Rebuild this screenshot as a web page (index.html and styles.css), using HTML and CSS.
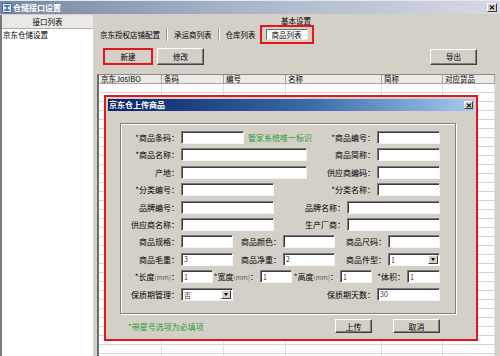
FILE: index.html
```html
<!DOCTYPE html>
<html lang="zh-CN">
<head>
  <meta charset="UTF-8" />
  <title>仓储接口设置</title>
  <link rel="stylesheet" href="styles.css">
</head>
<body>

  <header class="titlebar">
    <svg class="app-icon" viewBox="0 0 10 10">
      <rect x="0.5" y="0.5" width="9" height="9" rx="1" fill="#eef3fb" stroke="#3563b4"/>
      <rect x="2" y="2.2" width="6" height="1.4" fill="#3563b4"/>
      <rect x="4.3" y="2.2" width="1.4" height="5.6" fill="#3563b4"/>
      <rect x="2" y="6.4" width="6" height="1.4" fill="#3563b4"/>
    </svg>
    <span class="title">仓储接口设置</span>
    <span class="win-close">
      <svg viewBox="0 0 7 6"><path d="M1 0.8L6 5.2M6 0.8L1 5.2" stroke="#000" stroke-width="1.3"/></svg>
    </span>
  </header>

  <div class="main">
    <aside class="side">
      <div class="side-head">接口列表</div>
      <ul class="side-list">
        <li>京东仓储设置</li>
      </ul>
    </aside>

    <section class="content">
      <div class="caption">基本设置</div>

      <div class="tabs">
        <span class="tab">京东授权店铺配置</span>
        <span class="sep"></span>
        <span class="tab">承运商列表</span>
        <span class="sep"></span>
        <span class="tab plain">仓库列表</span>
        <span class="mark"><span class="tab active">商品列表</span></span>
      </div>

      <div class="toolbar">
        <button class="btn marked">新建</button>
        <button class="btn">修改</button>
        <button class="btn export">导出</button>
      </div>

      <table class="grid">
        <colgroup>
          <col style="width:63px"><col style="width:62px"><col style="width:62px">
          <col style="width:96px"><col style="width:61px"><col>
        </colgroup>
        <thead>
          <tr><th>京东JosIBO</th><th>条码</th><th>编号</th><th>名称</th><th>简称</th><th>对应货品</th></tr>
        </thead>
        <tbody>
          <tr><td></td><td></td><td></td><td></td><td></td><td></td></tr>
          <tr><td></td><td></td><td></td><td></td><td></td><td></td></tr>
          <tr><td></td><td></td><td></td><td></td><td></td><td></td></tr>
          <tr><td></td><td></td><td></td><td></td><td></td><td></td></tr>
          <tr><td></td><td></td><td></td><td></td><td></td><td></td></tr>
          <tr><td></td><td></td><td></td><td></td><td></td><td></td></tr>
          <tr><td></td><td></td><td></td><td></td><td></td><td></td></tr>
          <tr><td></td><td></td><td></td><td></td><td></td><td></td></tr>
          <tr><td></td><td></td><td></td><td></td><td></td><td></td></tr>
          <tr><td></td><td></td><td></td><td></td><td></td><td></td></tr>
          <tr><td></td><td></td><td></td><td></td><td></td><td></td></tr>
          <tr><td></td><td></td><td></td><td></td><td></td><td></td></tr>
          <tr><td></td><td></td><td></td><td></td><td></td><td></td></tr>
          <tr><td></td><td></td><td></td><td></td><td></td><td></td></tr>
          <tr><td></td><td></td><td></td><td></td><td></td><td></td></tr>
          <tr><td></td><td></td><td></td><td></td><td></td><td></td></tr>
          <tr><td></td><td></td><td></td><td></td><td></td><td></td></tr>
          <tr><td></td><td></td><td></td><td></td><td></td><td></td></tr>
          <tr><td></td><td></td><td></td><td></td><td></td><td></td></tr>
          <tr><td></td><td></td><td></td><td></td><td></td><td></td></tr>
          <tr><td></td><td></td><td></td><td></td><td></td><td></td></tr>
          <tr><td></td><td></td><td></td><td></td><td></td><td></td></tr>
          <tr><td></td><td></td><td></td><td></td><td></td><td></td></tr>
          <tr><td></td><td></td><td></td><td></td><td></td><td></td></tr>
          <tr><td></td><td></td><td></td><td></td><td></td><td></td></tr>
          <tr><td></td><td></td><td></td><td></td><td></td><td></td></tr>
          <tr><td></td><td></td><td></td><td></td><td></td><td></td></tr>
          <tr><td></td><td></td><td></td><td></td><td></td><td></td></tr>
          <tr><td></td><td></td><td></td><td></td><td></td><td></td></tr>
          <tr><td></td><td></td><td></td><td></td><td></td><td></td></tr>
          <tr><td></td><td></td><td></td><td></td><td></td><td></td></tr>
        </tbody>
      </table>
    </section>
  </div>

  <!-- upload dialog, with the red annotation frame round it -->
  <div class="dialog-frame">
    <div class="dialog">
      <div class="dlg-title">
        <span class="dlg-text">京东仓上传商品</span>
        <span class="dlg-close">
          <svg viewBox="0 0 7 6"><path d="M1 0.8L6 5.2M6 0.8L1 5.2" stroke="#000" stroke-width="1.3"/></svg>
        </span>
      </div>

      <div class="group">
        <div class="row">
          <span class="lbl">*商品条码：</span>
          <input class="field w63" type="text">
          <span class="note">管家系统唯一标识</span>
          <span class="lbl fill">*商品编号：</span>
          <input class="field w63" type="text">
        </div>
        <div class="row">
          <span class="lbl">*商品名称：</span>
          <input class="field w126" type="text">
          <span class="lbl fill">商品简称：</span>
          <input class="field w63" type="text">
        </div>
        <div class="row">
          <span class="lbl">产地：</span>
          <input class="field w126" type="text">
          <span class="lbl fill">供应商编码：</span>
          <input class="field w63" type="text">
        </div>
        <div class="row">
          <span class="lbl">*分类编号：</span>
          <input class="field w93" type="text">
          <span class="lbl fill">*分类名称：</span>
          <input class="field w63" type="text">
        </div>
        <div class="row">
          <span class="lbl">品牌编号：</span>
          <input class="field w93" type="text">
          <span class="lbl fill">品牌名称：</span>
          <input class="field w93" type="text">
        </div>
        <div class="row">
          <span class="lbl">供应商名称：</span>
          <input class="field w93" type="text">
          <span class="lbl fill">生产厂商：</span>
          <input class="field w93" type="text">
        </div>
        <div class="row">
          <span class="lbl">商品规格：</span>
          <input class="field w52" type="text">
          <span class="lbl mid">商品颜色：</span>
          <input class="field w52" type="text">
          <span class="lbl fill">商品尺码：</span>
          <input class="field w52" type="text">
        </div>
        <div class="row">
          <span class="lbl">商品毛重：</span>
          <input class="field w52" type="text" value="3">
          <span class="lbl mid">商品净重：</span>
          <input class="field w52" type="text" value="2">
          <span class="lbl fill">商品件型：</span>
          <span class="combo w52"><span class="combo-val">1</span><span class="combo-btn"></span></span>
        </div>
        <div class="row">
          <span class="lbl">*长度<span class="unit">(mm)</span>：</span>
          <input class="field w32" type="text" value="1">
          <span class="lbl len2">*宽度<span class="unit">(mm)</span>：</span>
          <input class="field w32" type="text" value="1">
          <span class="lbl len3">*高度<span class="unit">(mm)</span>：</span>
          <input class="field w32" type="text" value="1">
          <span class="lbl fill">*体积：</span>
          <input class="field w33" type="text" value="1">
        </div>
        <div class="row">
          <span class="lbl">保质期管理：</span>
          <span class="combo w52"><span class="combo-val">否</span><span class="combo-btn"></span></span>
          <span class="lbl fill">保质期天数：</span>
          <input class="field w63" type="text" value="30">
        </div>
      </div>

      <div class="dlg-foot">
        <span class="hint">*带星号选项为必填项</span>
        <button class="btn upload">上传</button>
        <button class="btn cancel">取消</button>
      </div>
    </div>
  </div>

</body>
</html>
```

FILE: styles.css
```css
/* Base */
* {
  box-sizing: border-box;
}

body {
  margin: 0;
  width: 500px;
  height: 356px;
  overflow: hidden;
  position: relative;
  background: #d4d0c8;
  font-family: "Noto Sans CJK SC", "Noto Sans", sans-serif;
  font-size: 7.5px;
  color: #000;
}

/* Window title bar */
.titlebar {
  height: 14px;
  display: flex;
  align-items: center;
  padding: 0 3px 0 2px;
  background: linear-gradient(to right, #7686a5, #a7b2c7 45%, #d5dae4);
  border-top: 1px solid #e4e8ef;
}

.app-icon {
  width: 10px;
  height: 10px;
  margin-right: 1px;
}

.title {
  flex: 1;
  color: #fff;
  font-size: 8px;
  font-weight: bold;
  line-height: 13px;
}

.win-close,
.dlg-close {
  width: 10px;
  height: 9px;
  display: flex;
  align-items: center;
  justify-content: center;
  background: #d4d0c8;
  border: 1px solid;
  border-color: #fff #404040 #404040 #fff;
}

.win-close svg,
.dlg-close svg {
  width: 6px;
  height: 5px;
}

/* Layout */
.main {
  display: flex;
  height: 342px;
}

.side {
  width: 93px;
  margin-top: 1px;
  border-left: 2px solid #7a7a7a;
  background: #fff;
}

.side-head {
  height: 14px;
  line-height: 14px;
  text-align: center;
  background: #ebe9e4;
  border-bottom: 1px solid #b3b0a9;
}

.side-list {
  margin: 0;
  padding: 2px 1px;
  list-style: none;
  line-height: 8px;
}

.content {
  flex: 1;
  min-width: 0;
  overflow: hidden;
  display: flex;
  flex-direction: column;
  padding: 2px 5px 0 4px;
}

.caption {
  height: 9px;
  line-height: 9px;
  text-align: center;
}

/* Tabs */
.tabs {
  height: 18px;
  display: flex;
  align-items: center;
  padding-left: 3px;
}

.tab {
  padding: 0 6px;
  line-height: 9px;
  white-space: nowrap;
}

.tab:first-child {
  padding-left: 0;
}

.tab.plain {
  padding-right: 4px;
}

.sep {
  width: 2px;
  height: 13px;
  border-left: 1px solid #9c9a94;
  border-right: 1px solid #fff;
}

.mark {
  display: flex;
  align-items: center;
  padding: 2px 4px;
  border: 2px solid #e3161c;
}

.tab.active {
  height: 11px;
  padding: 0 5px;
  line-height: 9px;
  background: #fff;
  border: 1px solid;
  border-color: #6f6f6f #e8e8e8 #e8e8e8 #6f6f6f;
}

/* Buttons */
.btn {
  height: 16px;
  padding: 0;
  font-family: inherit;
  font-size: 7.5px;
  line-height: 9px;
  color: #000;
  background: #d4d0c8;
  border: 1px solid;
  border-color: #fff #404040 #404040 #fff;
  box-shadow: inset -1px -1px 0 #808080;
}

.toolbar {
  height: 17px;
  display: flex;
  align-items: center;
  margin-top: 5px;
}

.toolbar .btn {
  width: 47px;
  height: 17px;
  margin-left: 4px;
}

.toolbar .btn.marked {
  width: 50px;
  margin-left: 6px;
  outline: 2px solid #e3161c;
  outline-offset: -2px;
}

.toolbar .btn.export {
  height: 16px;
  margin-left: auto;
  margin-right: 18px;
}

/* Data grid */
.grid {
  width: 398px;
  margin-top: 9px;
  table-layout: fixed;
  border-collapse: separate;
  border-spacing: 0;
  border-left: 2px solid #6e6e6e;
  border-top: 1px solid #8a8a8a;
  background: #fff;
}

.grid tr {
  height: 9px;
}

.grid th {
  padding: 0 2px;
  font-weight: normal;
  text-align: left;
  line-height: 8px;
  white-space: nowrap;
  background: #eceae5;
  border-right: 1px solid #a5a5a5;
  border-bottom: 1px solid #a5a5a5;
}

.grid td {
  padding: 0;
  line-height: 8px;
  border-right: 1px solid #e0e0e0;
  border-bottom: 1px solid #d4d4d4;
}

/* Dialog */
.dialog-frame {
  position: absolute;
  left: 104px;
  top: 95px;
  width: 374px;
  height: 246px;
  border: 2px solid #e3161c;
}

.dialog {
  height: 100%;
  padding: 2px;
  background: #d4d0c8;
  display: flex;
  flex-direction: column;
}

.dlg-title {
  height: 12px;
  display: flex;
  align-items: center;
  padding: 0 1px;
  background: linear-gradient(to right, #0a246a, #3b6aa8 55%, #a6caf0);
}

.dlg-text {
  flex: 1;
  color: #fff;
  font-size: 8px;
  font-weight: bold;
  line-height: 12px;
}

.dlg-close {
  width: 9px;
  height: 8px;
}

.group {
  height: 191px;
  margin: 12px 18px 0 12px;
  padding: 7px 15px 0 0;
  display: flex;
  flex-direction: column;
  gap: 4.4px;
  font-size: 8px;
  border: 1px solid #808080;
  box-shadow: inset 1px 1px 0 #fff, 1px 1px 0 #fff;
}

.row {
  height: 13px;
  display: flex;
  align-items: center;
}

.lbl {
  flex: none;
  width: 58px;
  margin-right: 2px;
  text-align: right;
  white-space: nowrap;
  line-height: 13px;
}

.lbl.mid {
  width: 48px;
}

.lbl.len2 {
  width: 45px;
}

.lbl.len3 {
  width: 46px;
}

.lbl.fill {
  flex: 1;
  width: auto;
}

.unit {
  font-size: 6.5px;
  color: #555;
}

.note {
  margin-left: 4px;
  color: #2f9a35;
  white-space: nowrap;
}

.field {
  flex: none;
  height: 13px;
  margin: 0;
  padding: 0 2px;
  font-family: inherit;
  font-size: 7px;
  color: #333;
  background: #fff;
  border: 1px solid;
  border-color: #7a7a7a #f4f4f4 #f4f4f4 #7a7a7a;
  box-shadow: inset 1px 1px 0 #3c3c3c;
  outline: none;
}

.w32 { width: 32px; }
.w33 { width: 33px; }
.w52 { width: 52px; }
.w63 { width: 63px; }
.w93 { width: 93px; }
.w126 { width: 126px; }

/* Combo box */
.combo {
  flex: none;
  height: 13px;
  display: flex;
  align-items: stretch;
  padding: 1px 1px 1px 2px;
  background: #fff;
  border: 1px solid;
  border-color: #7a7a7a #f4f4f4 #f4f4f4 #7a7a7a;
  box-shadow: inset 1px 1px 0 #3c3c3c;
}

.combo-val {
  flex: 1;
  font-size: 7px;
  line-height: 10px;
  color: #333;
}

.combo-btn {
  width: 10px;
  display: flex;
  align-items: center;
  justify-content: center;
  background: #d4d0c8;
  border: 1px solid;
  border-color: #fff #404040 #404040 #fff;
}

.combo-btn::after {
  content: "";
  border-left: 2.5px solid transparent;
  border-right: 2.5px solid transparent;
  border-top: 3px solid #000;
}

/* Dialog footer */
.dlg-foot {
  height: 14px;
  display: flex;
  align-items: center;
  margin-top: 5px;
  padding: 0 34px 0 20px;
}

.hint {
  flex: 1;
  color: #2f9a35;
  font-size: 8px;
}

.dlg-foot .btn {
  height: 14px;
  font-size: 8px;
}

.btn.upload {
  width: 37px;
}

.btn.cancel {
  width: 47px;
  margin-left: 21px;
}
```
